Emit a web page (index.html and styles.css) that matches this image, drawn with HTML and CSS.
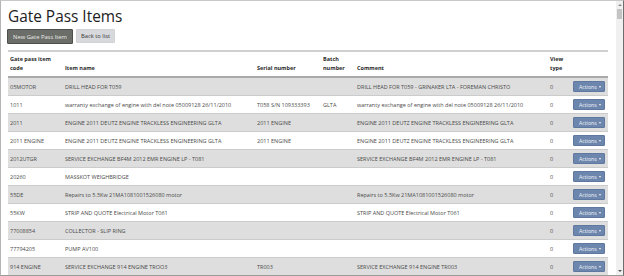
FILE: index.html
```html
<!DOCTYPE html>
<html>
<head>
<meta charset="utf-8">
<link rel="stylesheet" href="styles.css">
</head>
<body>
<div class="frame">
  <div class="page">
    <h1 class="title">Gate Pass Items</h1>
    <div class="toolbar">
      <button class="btn btn-dark">New Gate Pass Item</button>
      <button class="btn btn-light">Back to list</button>
    </div>
    <table class="grid">
      <colgroup>
        <col class="c-code"><col class="c-name"><col class="c-serial"><col class="c-batch"><col class="c-comment"><col class="c-view"><col class="c-act">
      </colgroup>
      <thead>
        <tr>
          <th>Gate pass item<br>code</th>
          <th>Item name</th>
          <th>Serial number</th>
          <th>Batch<br>number</th>
          <th>Comment</th>
          <th>View<br>type</th>
          <th></th>
        </tr>
      </thead>
      <tbody>
        <tr><td>05MOTOR</td><td>DRILL HEAD FOR T059</td><td></td><td></td><td>DRILL HEAD FOR T059 - GRINAKER LTA - FOREMAN CHRISTO</td><td>0</td><td><span class="act">Actions</span></td></tr>
        <tr><td>1011</td><td>warranty exchange of engine with del note 05009128 26/11/2010</td><td>T058 S/N 109333393</td><td>GLTA</td><td>warranty exchange of engine with del note 05009128 26/11/2010</td><td>0</td><td><span class="act">Actions</span></td></tr>
        <tr><td>2011</td><td>ENGINE 2011 DEUTZ ENGINE TRACKLESS ENGINEERING GLTA</td><td>2011 ENGINE</td><td></td><td>ENGINE 2011 DEUTZ ENGINE TRACKLESS ENGINEERING GLTA</td><td>0</td><td><span class="act">Actions</span></td></tr>
        <tr><td>2011 ENGINE</td><td>ENGINE 2011 DEUTZ ENGINE TRACKLESS ENGINEERING GLTA</td><td>2011 ENGINE</td><td></td><td>ENGINE 2011 DEUTZ ENGINE TRACKLESS ENGINEERING GLTA</td><td>0</td><td><span class="act">Actions</span></td></tr>
        <tr><td>2012UTGR</td><td>SERVICE EXCHANGE BF4M 2012 EMR ENGINE LP - T081</td><td></td><td></td><td>SERVICE EXCHANGE BF4M 2012 EMR ENGINE LP - T081</td><td>0</td><td><span class="act">Actions</span></td></tr>
        <tr><td>20260</td><td>MASSKOT WEIGHBRIDGE</td><td></td><td></td><td></td><td>0</td><td><span class="act">Actions</span></td></tr>
        <tr><td>55DE</td><td>Repairs to 5.5Kw 21MA1081001526080 motor</td><td></td><td></td><td>Repairs to 5.5Kw 21MA1081001526080 motor</td><td>0</td><td><span class="act">Actions</span></td></tr>
        <tr><td>55KW</td><td>STRIP AND QUOTE Electrical Motor T061</td><td></td><td></td><td>STRIP AND QUOTE Electrical Motor T061</td><td>0</td><td><span class="act">Actions</span></td></tr>
        <tr><td>77008854</td><td>COLLECTOR - SLIP RING</td><td></td><td></td><td></td><td>0</td><td><span class="act">Actions</span></td></tr>
        <tr><td>77794205</td><td>PUMP AV100</td><td></td><td></td><td></td><td>0</td><td><span class="act">Actions</span></td></tr>
        <tr><td>914 ENGINE</td><td>SERVICE EXCHANGE 914 ENGINE TROO3</td><td>TR003</td><td></td><td>SERVICE EXCHANGE 914 ENGINE TR003</td><td>0</td><td><span class="act">Actions</span></td></tr>
      </tbody>
    </table>
  </div>
  <div class="scrollbar">
    <span class="arrow-up"></span>
    <span class="thumb"></span>
    <span class="spacer"></span>
    <span class="arrow-down"></span>
  </div>
</div>
</body>
</html>
```
FILE: styles.css
```css
html, body {
  margin: 0;
  padding: 0;
  background: #ffffff;
}
.frame {
  box-sizing: border-box;
  width: 624px;
  height: 276px;
  border-top: 1px solid #c9c9c9;
  border-left: 1px solid #b5b5b5;
  border-right: 1px solid #6e6e6e;
  border-bottom: 1px solid #9a9a9a;
  display: flex;
  overflow: hidden;
  font-family: "Open Sans", "Noto Sans", sans-serif;
}
.page {
  flex: 1;
  min-width: 0;
  padding: 6px 6px 0 7px;
  overflow: hidden;
}
.title {
  margin: 0;
  font-size: 15.4px;
  line-height: 20px;
  font-weight: 500;
  color: #1d1d1d;
}
.toolbar {
  display: flex;
  gap: 3px;
  margin-top: 2px;
  margin-left: -1px;
}
.btn {
  font-family: inherit;
  font-size: 5.8px;
  padding: 0 2px;
  margin: 0;
  border-radius: 1px;
  cursor: pointer;
}
.btn-dark {
  width: 66px;
  height: 15px;
  background: #6b6e68;
  border: 1px solid #4c4f4a;
  color: #ececec;
}
.btn-light {
  width: 39px;
  height: 14px;
  background: #d8d9dc;
  border: 1px solid #d2d3d6;
  color: #333;
}
.grid {
  margin-top: 6px;
  width: 600px;
  table-layout: fixed;
  border-collapse: collapse;
  font-size: 5.5px;
  color: #4a4a4a;
}
.c-code { width: 55px; }
.c-name { width: 192px; }
.c-serial { width: 66px; }
.c-batch { width: 34px; }
.c-comment { width: 193px; }
.c-view { width: 23px; }
.c-act { width: 37px; }
.grid thead tr {
  border-top: 2px solid #d0d0d0;
  border-bottom: 2px solid #a9a9a9;
}
.grid th {
  text-align: left;
  vertical-align: bottom;
  font-weight: 700;
  color: #2a2a2a;
  line-height: 9px;
  padding: 3px 2px 3px 2px;
  height: 17px;
}
.grid td {
  height: 17px;
  padding: 0 2px;
  line-height: 8px;
  white-space: nowrap;
  overflow: hidden;
  vertical-align: middle;
}
.grid tbody tr {
  border-top: 1.5px solid #cbcbcb;
}
.grid tbody tr:first-child {
  border-top: none;
}
.grid tbody tr:nth-child(odd) {
  background: #dedede;
}
.act {
  display: inline-flex;
  align-items: center;
  gap: 2px;
  box-sizing: border-box;
  height: 11px;
  width: 32px;
  padding-left: 5px;
  background: #6d86ad;
  border: 1px solid #5f789f;
  border-radius: 1px;
  color: #f4f6fa;
  font-size: 5.2px;
}
.act::after {
  content: "";
  border-left: 1.6px solid transparent;
  border-right: 1.6px solid transparent;
  border-top: 2px solid #f4f6fa;
}
.scrollbar {
  flex: 0 0 7px;
  background: #f0f0f0;
  display: flex;
  flex-direction: column;
  align-items: center;
}
.arrow-up {
  margin-top: 3px;
  border-left: 2px solid transparent;
  border-right: 2px solid transparent;
  border-bottom: 2px solid #8a8a8a;
}
.thumb {
  margin-top: 3px;
  width: 5px;
  height: 10px;
  background: #c4c4c4;
}
.spacer { flex: 1; }
.arrow-down {
  margin-bottom: 3px;
  border-left: 2px solid transparent;
  border-right: 2px solid transparent;
  border-top: 2px solid #555;
}
```
